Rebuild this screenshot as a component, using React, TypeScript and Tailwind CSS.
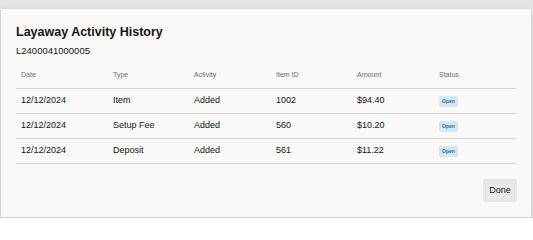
import React from "react";

const rows = [
  { date: "12/12/2024", type: "Item", activity: "Added", itemId: "1002", amount: "$94.40", status: "Open" },
  { date: "12/12/2024", type: "Setup Fee", activity: "Added", itemId: "560", amount: "$10.20", status: "Open" },
  { date: "12/12/2024", type: "Deposit", activity: "Added", itemId: "561", amount: "$11.22", status: "Open" },
];

const cols = ["w-[92px]", "w-[81px]", "w-[82px]", "w-[81px]", "w-[82px]", "w-[82px]"];

export default function App() {
  return (
    <div className="w-[533px] h-[218px] bg-[#e4e4e4] pt-[9px] pr-[2px] pb-[1px] pl-[1px] font-['Liberation_Sans',Arial,sans-serif] overflow-hidden">
      <div className="h-[208px] bg-[#faf9f8] shadow-[0_2px_6px_rgba(0,0,0,0.15)] flex flex-col pl-[15px] pr-[14px]">
        <h2 className="mt-[15px] text-[12.5px] leading-[16px] font-bold text-[#161513]">
          Layaway Activity History
        </h2>
        <div className="mt-[5px] text-[9.5px] leading-[12px] text-[#161513]">L2400041000005</div>

        <table className="mt-[6px] w-[500px] table-fixed border-collapse text-left">
          <thead>
            <tr className="border-b border-[#d6d4d2] h-[25px]">
              {["Date", "Type", "Activity", "Item ID", "Amount", "Status"].map((h, i) => (
                <th key={h} className={`${cols[i]} pl-[5px] text-[7px] font-normal text-[#6f6b68] align-middle`}>
                  {h}
                </th>
              ))}
            </tr>
          </thead>
          <tbody>
            {rows.map((r, idx) => (
              <tr key={idx} className="border-b border-[#d6d4d2] h-[25px] text-[9px] text-[#161513]">
                <td className="pl-[5px]">{r.date}</td>
                <td className="pl-[5px]">{r.type}</td>
                <td className="pl-[5px]">{r.activity}</td>
                <td className="pl-[5px]">{r.itemId}</td>
                <td className="pl-[5px]">{r.amount}</td>
                <td className="pl-[5px]">
                  <span className="inline-flex items-center justify-center w-[19px] h-[11px] rounded-[2px] bg-[#d3e7f4] text-[5px] font-bold text-[#2a6c8e]">
                    {r.status}
                  </span>
                </td>
              </tr>
            ))}
          </tbody>
        </table>

        <div className="mt-auto mb-[15px] flex justify-end">
          <button className="w-[34px] h-[23px] rounded-[2px] bg-[#e9e7e5] text-[9px] text-[#161513]">
            Done
          </button>
        </div>
      </div>
    </div>
  );
}
